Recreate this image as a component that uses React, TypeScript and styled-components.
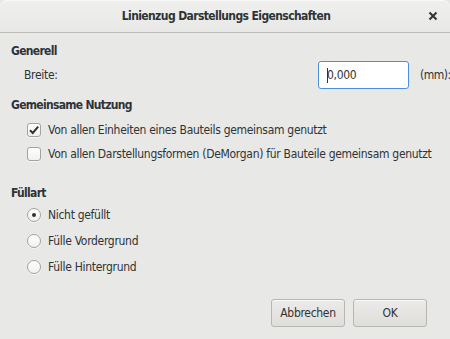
import React, { useState } from 'react'
import styled, { createGlobalStyle } from 'styled-components'

const GlobalStyle = createGlobalStyle`
  html, body {
    margin: 0;
    padding: 0;
    background: #e8e8e7;
  }
  body {
    font-family: "DejaVu Sans Condensed", "DejaVu Sans", sans-serif;
    font-size: 12px;
    letter-spacing: -0.3px;
    color: #2e3436;
  }
`

const Window = styled.div`
  width: 450px;
  height: 339px;
  background: #e8e8e7;
  border-radius: 7px 7px 0 0;
  overflow: hidden;
  display: flex;
  flex-direction: column;
`

const TitleBar = styled.div`
  height: 32px;
  flex-shrink: 0;
  position: relative;
  display: flex;
  align-items: center;
  justify-content: center;
  background: linear-gradient(#efefee, #e8e8e7);
  border-bottom: 1px solid #bcbcb9;
  border-radius: 7px 7px 0 0;
  box-shadow: inset 0 1px #fafafa;
`

const Title = styled.span`
  font-weight: bold;
  font-size: 12px;
  letter-spacing: -0.6px;
  padding-left: 2px;
`

const CloseButton = styled.div`
  position: absolute;
  right: 12px;
  top: 11px;
  width: 10px;
  height: 10px;
  display: flex;
`

const Content = styled.div`
  padding: 10px 0 0 11px;
  display: flex;
  flex-direction: column;
`

const Heading = styled.div<{ $gap?: number }>`
  font-weight: bold;
  letter-spacing: -0.7px;
  line-height: 16px;
  margin-top: ${p => p.$gap ?? 0}px;
`

const FieldRow = styled.div`
  margin-top: 2px;
  height: 28px;
  display: flex;
  align-items: center;
`

const FieldLabel = styled.span`
  flex: 1;
  padding-left: 13px;
`

const Input = styled.div`
  height: 26px;
  width: 81px;
  flex-shrink: 0;
  background: #fff;
  border: 1px solid #4a90d9;
  border-radius: 3px;
  display: flex;
  align-items: center;
  padding-left: 8px;
  box-sizing: content-box;
`

const Caret = styled.span`
  width: 1px;
  height: 15px;
  background: #2e3436;
  margin-right: -1px;
`

const Unit = styled.span`
  margin-left: 11px;
  white-space: nowrap;
  letter-spacing: -0.5px;
  flex-shrink: 0;
  width: 30px;
`

const OptionList = styled.div<{ $gap: number; $row: number }>`
  margin-top: ${p => p.$gap}px;
  display: flex;
  flex-direction: column;
  & > label {
    height: ${p => p.$row}px;
  }
`

const Option = styled.label`
  display: flex;
  align-items: center;
  gap: 7px;
  padding-left: 16px;
  white-space: nowrap;
`

const Box = styled.span<{ $round?: boolean }>`
  width: 12px;
  height: 12px;
  flex-shrink: 0;
  border: 1px solid #a3a39f;
  border-radius: ${p => (p.$round ? '50%' : '3px')};
  background: linear-gradient(#ffffff, #f1f1f0);
  box-shadow: 0 1px rgba(255, 255, 255, 0.6);
  display: flex;
  align-items: center;
  justify-content: center;
`

const Dot = styled.span`
  width: 4px;
  height: 4px;
  border-radius: 50%;
  background: #2e3436;
`

const ButtonBar = styled.div`
  margin-top: 19px;
  padding-right: 23px;
  display: flex;
  justify-content: flex-end;
  gap: 8px;
`

const Button = styled.button`
  width: 74px;
  height: 28px;
  font: inherit;
  letter-spacing: inherit;
  color: #2e3436;
  border: 1px solid #b6b6b3;
  border-radius: 3px;
  background: linear-gradient(#edebe9, #e0deda);
  box-shadow: inset 0 1px #fafaf9;
  padding: 0;
`

function CheckMark() {
  return (
    <svg width="12" height="12" viewBox="0 0 12 12">
      <path d="M2 6.2 L4.8 9 L10.2 2.6" fill="none" stroke="#2e3436" strokeWidth="2" />
    </svg>
  )
}

export default function App() {
  const [shared, setShared] = useState([true, false])
  const [fill, setFill] = useState(0)

  const sharing = [
    'Von allen Einheiten eines Bauteils gemeinsam genutzt',
    'Von allen Darstellungsformen (DeMorgan) für Bauteile gemeinsam genutzt',
  ]
  const fills = ['Nicht gefüllt', 'Fülle Vordergrund', 'Fülle Hintergrund']

  return (
    <>
      <GlobalStyle />
      <Window>
        <TitleBar>
          <Title>Linienzug Darstellungs Eigenschaften</Title>
          <CloseButton>
            <svg width="10" height="10" viewBox="0 0 10 10">
              <path d="M1.5 1.5 L8.5 8.5 M8.5 1.5 L1.5 8.5" stroke="#2e3436" strokeWidth="2" />
            </svg>
          </CloseButton>
        </TitleBar>
        <Content>
          <Heading>Generell</Heading>
          <FieldRow>
            <FieldLabel>Breite:</FieldLabel>
            <Input>
              <Caret />
              0,000
            </Input>
            <Unit>(mm):</Unit>
          </FieldRow>

          <Heading $gap={8}>Gemeinsame Nutzung</Heading>
          <OptionList $gap={5} $row={24}>
            {sharing.map((text, i) => (
              <Option key={text} onClick={() => setShared(s => s.map((v, j) => (j === i ? !v : v)))}>
                <Box>{shared[i] && <CheckMark />}</Box>
                {text}
              </Option>
            ))}
          </OptionList>

          <Heading $gap={19}>Füllart</Heading>
          <OptionList $gap={1} $row={26}>
            {fills.map((text, i) => (
              <Option key={text} onClick={() => setFill(i)}>
                <Box $round>{fill === i && <Dot />}</Box>
                {text}
              </Option>
            ))}
          </OptionList>

          <ButtonBar>
            <Button>Abbrechen</Button>
            <Button>OK</Button>
          </ButtonBar>
        </Content>
      </Window>
    </>
  )
}
